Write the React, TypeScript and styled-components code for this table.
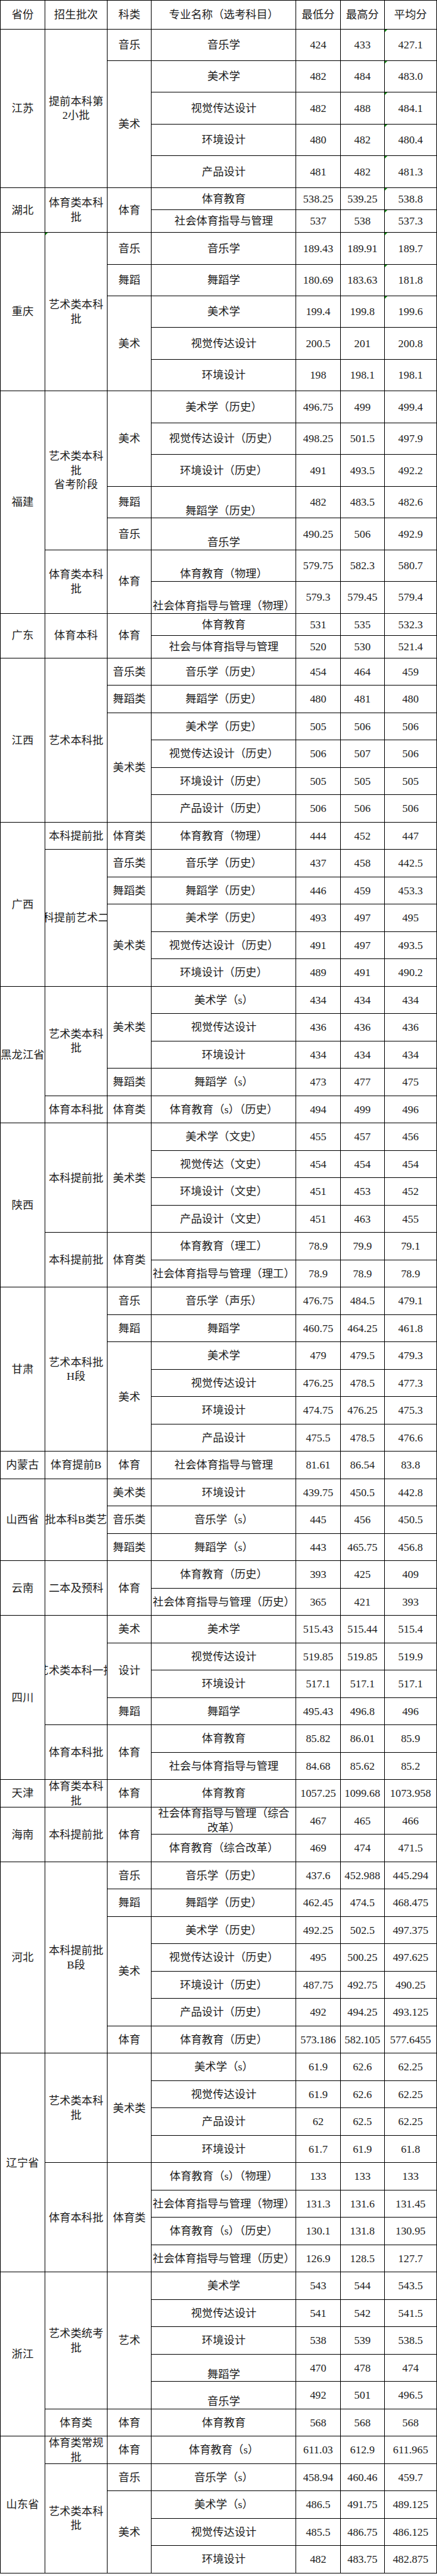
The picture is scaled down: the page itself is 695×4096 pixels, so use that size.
import React from 'react'
import styled, { createGlobalStyle, css } from 'styled-components'

type Major = { name: string; min: string; max: string; avg: string; low?: boolean; mark?: boolean }
type Category = { name: string; majors: Major[] }
type Batch = { name: string; mark?: boolean; cats: Category[] }
type Province = { name: string; rowH: number; batches: Batch[] }

// reference row heights, scaled down at render time
const TALL = 58
const SHORT = 41
const NORMAL = 50
const HEADER = 52.3
const SCALE = 0.87

const m = (name: string, min: string, max: string, avg: string, flag?: 'low' | 'mark'): Major => ({
	name, min, max, avg, low: flag === 'low', mark: flag === 'mark',
})

const provinces: Province[] = [
	{ name: '江苏', rowH: TALL, batches: [
		{ name: '提前本科第\n2小批', cats: [
			{ name: '音乐', majors: [m('音乐学', '424', '433', '427.1', 'mark')] },
			{ name: '美术', majors: [
				m('美术学', '482', '484', '483.0', 'mark'),
				m('视觉传达设计', '482', '488', '484.1', 'mark'),
				m('环境设计', '480', '482', '480.4', 'mark'),
				m('产品设计', '481', '482', '481.3', 'mark'),
			] },
		] },
	] },
	{ name: '湖北', rowH: SHORT, batches: [
		{ name: '体育类本科\n批', cats: [
			{ name: '体育', majors: [
				m('体育教育', '538.25', '539.25', '538.8', 'mark'),
				m('社会体育指导与管理', '537', '538', '537.3', 'mark'),
			] },
		] },
	] },
	{ name: '重庆', rowH: TALL, batches: [
		{ name: '艺术类本科\n批', mark: true, cats: [
			{ name: '音乐', majors: [m('音乐学', '189.43', '189.91', '189.7', 'mark')] },
			{ name: '舞蹈', majors: [m('舞蹈学', '180.69', '183.63', '181.8', 'mark')] },
			{ name: '美术', majors: [
				m('美术学', '199.4', '199.8', '199.6', 'mark'),
				m('视觉传达设计', '200.5', '201', '200.8'),
				m('环境设计', '198', '198.1', '198.1'),
			] },
		] },
	] },
	{ name: '福建', rowH: TALL, batches: [
		{ name: '艺术类本科\n批\n省考阶段', cats: [
			{ name: '美术', majors: [
				m('美术学（历史）', '496.75', '499', '499.4'),
				m('视觉传达设计（历史）', '498.25', '501.5', '497.9'),
				m('环境设计（历史）', '491', '493.5', '492.2'),
			] },
			{ name: '舞蹈', majors: [m('舞蹈学（历史）', '482', '483.5', '482.6', 'low')] },
			{ name: '音乐', majors: [m('音乐学', '490.25', '506', '492.9', 'low')] },
		] },
		{ name: '体育类本科\n批', cats: [
			{ name: '体育', majors: [
				m('体育教育（物理）', '579.75', '582.3', '580.7', 'low'),
				m('社会体育指导与管理（物理）', '579.3', '579.45', '579.4', 'low'),
			] },
		] },
	] },
	{ name: '广东', rowH: SHORT, batches: [
		{ name: '体育本科', cats: [
			{ name: '体育', majors: [
				m('体育教育', '531', '535', '532.3'),
				m('社会与体育指导与管理', '520', '530', '521.4'),
			] },
		] },
	] },
	{ name: '江西', rowH: NORMAL, batches: [
		{ name: '艺术本科批', cats: [
			{ name: '音乐类', majors: [m('音乐学（历史）', '454', '464', '459')] },
			{ name: '舞蹈类', majors: [m('舞蹈学（历史）', '480', '481', '480')] },
			{ name: '美术类', majors: [
				m('美术学（历史）', '505', '506', '506'),
				m('视觉传达设计（历史）', '506', '507', '506'),
				m('环境设计（历史）', '505', '505', '505'),
				m('产品设计（历史）', '506', '506', '506'),
			] },
		] },
	] },
	{ name: '广西', rowH: NORMAL, batches: [
		{ name: '本科提前批', cats: [
			{ name: '体育类', majors: [m('体育教育（物理）', '444', '452', '447')] },
		] },
		{ name: '本科提前艺术二批', cats: [
			{ name: '音乐类', majors: [m('音乐学（历史）', '437', '458', '442.5')] },
			{ name: '舞蹈类', majors: [m('舞蹈学（历史）', '446', '459', '453.3')] },
			{ name: '美术类', majors: [
				m('美术学（历史）', '493', '497', '495'),
				m('视觉传达设计（历史）', '491', '497', '493.5'),
				m('环境设计（历史）', '489', '491', '490.2'),
			] },
		] },
	] },
	{ name: '黑龙江省', rowH: NORMAL, batches: [
		{ name: '艺术类本科\n批', cats: [
			{ name: '美术类', majors: [
				m('美术学（s）', '434', '434', '434'),
				m('视觉传达设计', '436', '436', '436'),
				m('环境设计', '434', '434', '434'),
			] },
			{ name: '舞蹈类', majors: [m('舞蹈学（s）', '473', '477', '475')] },
		] },
		{ name: '体育本科批', cats: [
			{ name: '体育类', majors: [m('体育教育（s）（历史）', '494', '499', '496')] },
		] },
	] },
	{ name: '陕西', rowH: NORMAL, batches: [
		{ name: '本科提前批', cats: [
			{ name: '美术类', majors: [
				m('美术学（文史）', '455', '457', '456'),
				m('视觉传达（文史）', '454', '454', '454'),
				m('环境设计（文史）', '451', '453', '452'),
				m('产品设计（文史）', '451', '463', '455'),
			] },
		] },
		{ name: '本科提前批', cats: [
			{ name: '体育类', majors: [
				m('体育教育（理工）', '78.9', '79.9', '79.1'),
				m('社会体育指导与管理（理工）', '78.9', '78.9', '78.9'),
			] },
		] },
	] },
	{ name: '甘肃', rowH: NORMAL, batches: [
		{ name: '艺术本科批\nH段', cats: [
			{ name: '音乐', majors: [m('音乐学（声乐）', '476.75', '484.5', '479.1')] },
			{ name: '舞蹈', majors: [m('舞蹈学', '460.75', '464.25', '461.8')] },
			{ name: '美术', majors: [
				m('美术学', '479', '479.5', '479.3'),
				m('视觉传达设计', '476.25', '478.5', '477.3'),
				m('环境设计', '474.75', '476.25', '475.3'),
				m('产品设计', '475.5', '478.5', '476.6'),
			] },
		] },
	] },
	{ name: '内蒙古', rowH: NORMAL, batches: [
		{ name: '体育提前B', cats: [
			{ name: '体育', majors: [m('社会体育指导与管理', '81.61', '86.54', '83.8')] },
		] },
	] },
	{ name: '山西省', rowH: NORMAL, batches: [
		{ name: '提前批本科B类艺术类', cats: [
			{ name: '美术类', majors: [m('环境设计', '439.75', '450.5', '442.8')] },
			{ name: '音乐类', majors: [m('音乐学（s）', '445', '456', '450.5')] },
			{ name: '舞蹈类', majors: [m('舞蹈学（s）', '443', '465.75', '456.8')] },
		] },
	] },
	{ name: '云南', rowH: NORMAL, batches: [
		{ name: '二本及预科', cats: [
			{ name: '体育', majors: [
				m('体育教育（历史）', '393', '425', '409'),
				m('社会体育指导与管理（历史）', '365', '421', '393'),
			] },
		] },
	] },
	{ name: '四川', rowH: NORMAL, batches: [
		{ name: '艺术类本科一批', cats: [
			{ name: '美术', majors: [m('美术学', '515.43', '515.44', '515.4')] },
			{ name: '设计', majors: [
				m('视觉传达设计', '519.85', '519.85', '519.9'),
				m('环境设计', '517.1', '517.1', '517.1'),
			] },
			{ name: '舞蹈', majors: [m('舞蹈学', '495.43', '496.8', '496')] },
		] },
		{ name: '体育本科批', cats: [
			{ name: '体育', majors: [
				m('体育教育', '85.82', '86.01', '85.9'),
				m('社会与体育指导与管理', '84.68', '85.62', '85.2'),
			] },
		] },
	] },
	{ name: '天津', rowH: NORMAL, batches: [
		{ name: '体育类本科\n批', cats: [
			{ name: '体育', majors: [m('体育教育', '1057.25', '1099.68', '1073.958')] },
		] },
	] },
	{ name: '海南', rowH: NORMAL, batches: [
		{ name: '本科提前批', cats: [
			{ name: '体育', majors: [
				m('社会体育指导与管理（综合\n改革）', '467', '465', '466'),
				m('体育教育（综合改革）', '469', '474', '471.5'),
			] },
		] },
	] },
	{ name: '河北', rowH: NORMAL, batches: [
		{ name: '本科提前批\nB段', cats: [
			{ name: '音乐', majors: [m('音乐学（历史）', '437.6', '452.988', '445.294')] },
			{ name: '舞蹈', majors: [m('舞蹈学（历史）', '462.45', '474.5', '468.475')] },
			{ name: '美术', majors: [
				m('美术学（历史）', '492.25', '502.5', '497.375'),
				m('视觉传达设计（历史）', '495', '500.25', '497.625'),
				m('环境设计（历史）', '487.75', '492.75', '490.25'),
				m('产品设计（历史）', '492', '494.25', '493.125'),
			] },
			{ name: '体育', majors: [m('体育教育（历史）', '573.186', '582.105', '577.6455')] },
		] },
	] },
	{ name: '辽宁省', rowH: NORMAL, batches: [
		{ name: '艺术类本科\n批', cats: [
			{ name: '美术类', majors: [
				m('美术学（s）', '61.9', '62.6', '62.25'),
				m('视觉传达设计', '61.9', '62.6', '62.25'),
				m('产品设计', '62', '62.5', '62.25'),
				m('环境设计', '61.7', '61.9', '61.8'),
			] },
		] },
		{ name: '体育本科批', cats: [
			{ name: '体育类', majors: [
				m('体育教育（s）（物理）', '133', '133', '133'),
				m('社会体育指导与管理（物理）', '131.3', '131.6', '131.45'),
				m('体育教育（s）（历史）', '130.1', '131.8', '130.95'),
				m('社会体育指导与管理（历史）', '126.9', '128.5', '127.7'),
			] },
		] },
	] },
	{ name: '浙江', rowH: NORMAL, batches: [
		{ name: '艺术类统考\n批', cats: [
			{ name: '艺术', majors: [
				m('美术学', '543', '544', '543.5'),
				m('视觉传达设计', '541', '542', '541.5'),
				m('环境设计', '538', '539', '538.5'),
				m('舞蹈学', '470', '478', '474', 'low'),
				m('音乐学', '492', '501', '496.5', 'low'),
			] },
		] },
		{ name: '体育类', cats: [
			{ name: '体育', majors: [m('体育教育', '568', '568', '568')] },
		] },
	] },
	{ name: '山东省', rowH: NORMAL, batches: [
		{ name: '体育类常规\n批', cats: [
			{ name: '体育', majors: [m('体育教育（s）', '611.03', '612.9', '611.965')] },
		] },
		{ name: '艺术类本科\n批', cats: [
			{ name: '音乐', majors: [m('音乐学（s）', '458.94', '460.46', '459.7')] },
			{ name: '美术', majors: [
				m('美术学（s）', '486.5', '491.75', '489.125'),
				m('视觉传达设计', '485.5', '486.75', '486.125'),
				m('环境设计', '482', '483.75', '482.875'),
			] },
		] },
	] },
]

const headers = ['省份', '招生批次', '科类', '专业名称（选考科目）', '最低分', '最高分', '平均分']

const countBatch = (b: Batch) => b.cats.reduce((n, c) => n + c.majors.length, 0)
const countProvince = (p: Province) => p.batches.reduce((n, b) => n + countBatch(b), 0)

const App = () => {
	const heights: number[] = [HEADER]
	const cells: React.ReactNode[] = headers.map((h, i) => (
		<Cell key={`h${i}`} $col={i + 1} $span={1}>{h}</Cell>
	))
	let k = 0

	provinces.forEach((p) => {
		let firstP = true
		p.batches.forEach((b) => {
			let firstB = true
			b.cats.forEach((c) => {
				c.majors.forEach((mj, i) => {
					heights.push(p.rowH)
					if (firstP) cells.push(<Cell key={k++} $col={1} $span={countProvince(p)}>{p.name}</Cell>)
					if (firstB) cells.push(<Cell key={k++} $col={2} $span={countBatch(b)} $mark={b.mark}>{b.name}</Cell>)
					if (i === 0) cells.push(<Cell key={k++} $col={3} $span={c.majors.length}>{c.name}</Cell>)
					cells.push(<Cell key={k++} $col={4} $span={1} $bottom={mj.low}>{mj.name}</Cell>)
					cells.push(<Cell key={k++} $col={5} $span={1}>{mj.min}</Cell>)
					cells.push(<Cell key={k++} $col={6} $span={1}>{mj.max}</Cell>)
					cells.push(<Cell key={k++} $col={7} $span={1} $mark={mj.mark}>{mj.avg}</Cell>)
					firstP = false
					firstB = false
				})
			})
		})
	})

	const rows = heights.map((h) => `${(h * SCALE - 1).toFixed(2)}px`).join(' ')

	return (
		<>
			<GlobalStyle />
			<Table $rows={rows}>{cells}</Table>
		</>
	)
}

export default App

const GlobalStyle = createGlobalStyle`
	html, body {
		margin: 0;
		padding: 0;
		background: #fff;
	}
`

const Table = styled.div<{ $rows: string }>`
	display: grid;
	grid-template-columns: 69.8px 98.2px 69.4px 228.9px 69.4px 69.4px 81.7px;
	grid-template-rows: ${(p) => p.$rows};
	gap: 1px;
	padding: 1px;
	width: max-content;
	background: #000;
	font-family: "Liberation Serif", "Noto Sans CJK SC", serif;
	font-size: 17.4px;
	line-height: 22.6px;
	color: #1c1c1c;
`

const Cell = styled.div<{ $col: number; $span: number; $bottom?: boolean; $mark?: boolean }>`
	grid-column: ${(p) => p.$col};
	grid-row: span ${(p) => p.$span};
	position: relative;
	display: flex;
	align-items: ${(p) => (p.$bottom ? 'flex-end' : 'center')};
	justify-content: center;
	overflow: hidden;
	background: #fff;
	text-align: center;
	white-space: pre;

	${(p) => p.$mark && css`
		&::before {
			content: '';
			position: absolute;
			left: 0;
			top: 0;
			border-top: 4px solid #0a8a0a;
			border-right: 4px solid transparent;
		}
	`}
`
